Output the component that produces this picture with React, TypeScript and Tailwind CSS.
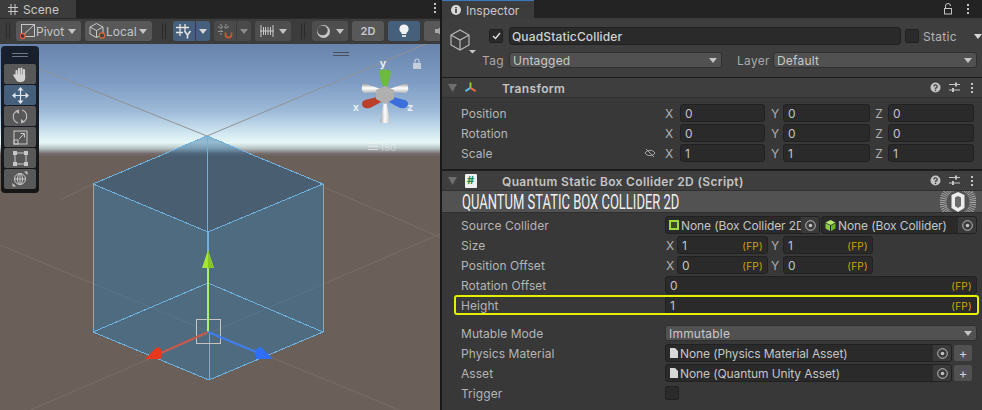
import React from 'react';

const Caret: React.FC<{ className?: string; color?: string }> = ({ className = '', color = '#c4c4c4' }) => (
  <svg width="8" height="5" viewBox="0 0 8 5" className={`shrink-0 ${className}`}>
    <path d="M0 0h8L4 5z" fill={color} />
  </svg>
);

const Grip = () => (
  <div className="flex gap-[2px] mx-[6px] shrink-0 mt-[2px]">
    <div className="w-px h-4 bg-[#2a2a2a]" />
    <div className="w-px h-4 bg-[#2a2a2a]" />
  </div>
);

const Kebab: React.FC<{ className?: string }> = ({ className = '' }) => (
  <svg width="4" height="12" viewBox="0 0 4 12" className={className}>
    <rect x="1" y="1" width="2" height="2" fill="#c4c4c4" />
    <rect x="1" y="5" width="2" height="2" fill="#c4c4c4" />
    <rect x="1" y="9" width="2" height="2" fill="#c4c4c4" />
  </svg>
);

const ToolBtn: React.FC<{ className?: string; children: React.ReactNode }> = ({ className = '', children }) => (
  <div className={`h-5 flex items-center justify-center rounded-[3px] shrink-0 ${className}`}>{children}</div>
);

const stroke = { fill: 'none', stroke: '#c8c8c8', strokeWidth: 1 };

const PivotIcon = () => (
  <svg width="16" height="18" viewBox="4 0 16 18" className="shrink-0">
    <rect x="5.5" y="2.5" width="13" height="12" {...stroke} />
    <path d="M6 14L18 3" {...stroke} />
    <circle cx="6.500" cy="14" r="2.600" fill="#3f3f3f" stroke="#e8643a" strokeWidth="1.200" />
  </svg>
);

const LocalIcon = () => (
  <svg width="17" height="18" viewBox="1.500 0 17 18" className="shrink-0">
    <path d="M2.500 5L9 1.500L15.500 5V12L9 15.500L2.500 12zM2.500 5L9 8.500L15.500 5M9 8.500V15.500" {...stroke} />
    <circle cx="14.500" cy="13.500" r="2.600" fill="#3f3f3f" stroke="#e8643a" strokeWidth="1.200" />
  </svg>
);

const GridYIcon = () => (
  <svg width="18" height="16" viewBox="0 0 18 16">
    <path d="M5 1V13M10 1V8M1 4.500H14M1 9.500H8" fill="none" stroke="#e4e4e4" strokeWidth="1.300" />
    <path d="M9.500 8L12.500 12L15.500 8M12.500 12V15.500" fill="none" stroke="#e4e4e4" strokeWidth="1.600" />
  </svg>
);

const SnapIcon = () => (
  <svg width="16" height="16" viewBox="0 0 16 16">
    <path d="M4 1V12M9 1V6M1 4H12M1 8.500H7" fill="none" stroke="#9a9a9a" strokeWidth="1" strokeDasharray="2 1" />
    <path d="M8.500 9.500V11.500A3 3 0 0 0 14.500 11.500V9.500" fill="none" stroke="#c05a30" strokeWidth="1.800" />
  </svg>
);

const IncrementIcon = () => (
  <svg width="14" height="14" viewBox="0 0 14 14">
    <path d="M1 1V13M13 1V13M0 7H14M3.500 3V11M5.500 3V11M8 3V11M10.500 3V11" fill="none" stroke="#c8c8c8" strokeWidth="1" />
  </svg>
);

const ShadedIcon = () => (
  <svg width="15" height="15" viewBox="0 0 15 15">
    <circle cx="7.500" cy="7.500" r="6.500" fill="#c8c8c8" />
    <ellipse cx="6.500" cy="6.500" rx="5.200" ry="4.800" fill="#4c4c4c" />
  </svg>
);

const BulbIcon = () => (
  <svg width="10" height="14" viewBox="0 0 10 14">
    <path d="M5 0.500A4.500 4.500 0 0 1 7.500 8.800V10H2.500V8.800A4.500 4.500 0 0 1 5 0.500z" fill="#f2f2f2" />
    <rect x="3" y="11" width="4" height="2" fill="#d8d8d8" />
  </svg>
);

const AudioIcon = () => (
  <svg width="12" height="12" viewBox="0 0 12 12">
    <path d="M0 4H3L7 1V11L3 8H0z" fill="#a8a8a8" />
    <path d="M9 3.500A3.500 3.500 0 0 1 9 8.500" fill="none" stroke="#a8a8a8" />
  </svg>
);

const HandTool = () => (
  <svg width="16" height="17" viewBox="0 0 16 17" strokeLinecap="round">
    <path d="M4.500 5V10M7 3V9M9.500 2.500V9M12 4V10" stroke="#d2d2d2" strokeWidth="2.100" fill="none" />
    <path d="M3.600 8.500H13.200V12C13.200 14.500 11.500 16 9 16H7.500C5.500 16 4.500 14.800 3.500 13L1.200 9.500C1 8.500 2.200 7.800 3 8.500z" fill="#d2d2d2" />
  </svg>
);

const MoveTool = () => (
  <svg width="17" height="17" viewBox="0 0 17 17">
    <path d="M8.500 3V14M3 8.500H14" stroke="#dfe6ee" strokeWidth="1.200" />
    <path d="M8.500 0L11.500 3.500H5.500zM8.500 17L5.500 13.500H11.500zM0 8.500L3.500 5.500V11.500zM17 8.500L13.500 11.500V5.500z" fill="#dfe6ee" />
  </svg>
);

const RotateTool = () => (
  <svg width="16" height="17" viewBox="0 0 16 17">
    <path d="M6 15A6.500 6.500 0 0 1 4 3.500M10 2A6.500 6.500 0 0 1 12 13.500" fill="none" stroke="#bdbdbd" strokeWidth="1.100" />
    <path d="M7 1.500V6L3 3zM9 15.500V11L13 14z" fill="#bdbdbd" />
  </svg>
);

const ScaleTool = () => (
  <svg width="15" height="15" viewBox="0 0 15 15">
    <rect x="1" y="1" width="13" height="13" {...stroke} />
    <rect x="1" y="10" width="4" height="4" {...stroke} />
    <path d="M6 9L11 4M7.500 3.500H11.500V7.500" {...stroke} />
  </svg>
);

const RectTool = () => (
  <svg width="15" height="15" viewBox="0 0 15 15">
    <rect x="2" y="2" width="11" height="11" {...stroke} />
    <path d="M0 0h4v4H0zM11 0h4v4h-4zM0 11h4v4H0zM11 11h4v4h-4z" fill="#c8c8c8" />
  </svg>
);

const TransformTool = () => (
  <svg width="16" height="16" viewBox="0 0 16 16">
    <circle cx="8" cy="8" r="5.500" {...stroke} />
    <path d="M8 2.500V13.500M2.500 8H13.500" {...stroke} />
    <path d="M12 0.500H15.500V4zM0.500 12L4 15.500H0.500z" fill="#c8c8c8" />
    <ellipse cx="8" cy="8" rx="2.500" ry="5.500" {...stroke} />
  </svg>
);

const SCENE_TOOLS = [
  { icon: <HandTool />, active: false },
  { icon: <MoveTool />, active: true },
  { icon: <RotateTool />, active: false },
  { icon: <ScaleTool />, active: false },
  { icon: <RectTool />, active: false },
  { icon: <TransformTool />, active: false },
];

const SceneOverlay = () => (
  <div className="absolute left-px top-[2px] w-[38px] h-[147px] rounded-[4px] bg-gradient-to-b from-[#18202e] to-[#161616] px-[3px] flex flex-col">
    <div className="h-[18px] flex flex-col items-center justify-center gap-[2px]">
      <div className="w-4 h-px bg-[#6e7888]" />
      <div className="w-4 h-px bg-[#6e7888]" />
    </div>
    <div className="flex flex-col gap-px">
      {SCENE_TOOLS.map((tool, i) => (
        <div key={i} className={`h-5 flex items-center justify-center rounded-[2px] ${tool.active ? 'bg-[#46607c]' : 'bg-[#585858]'}`}>
          {tool.icon}
        </div>
      ))}
    </div>
  </div>
);

const SceneDrawing = () => (
  <svg viewBox="0 44 440 366" width="440" height="366" className="block">
    <defs>
      <linearGradient id="sky" x1="0" y1="44" x2="0" y2="156" gradientUnits="userSpaceOnUse">
        <stop offset="0" stopColor="#6884ac" />
        <stop offset="0.35" stopColor="#7f9dc4" />
        <stop offset="0.6" stopColor="#9dbad8" />
        <stop offset="0.8" stopColor="#d2e8f2" />
        <stop offset="0.88" stopColor="#e6f7f6" />
        <stop offset="0.93" stopColor="#b9c6c8" />
        <stop offset="0.98" stopColor="#73696a" />
        <stop offset="1" stopColor="#6c615c" />
      </linearGradient>
      <linearGradient id="gizmoWhite" x1="0" y1="0" x2="0" y2="1">
        <stop offset="0" stopColor="#8e8e8e" />
        <stop offset="0.5" stopColor="#ffffff" />
        <stop offset="1" stopColor="#b8b8b8" />
      </linearGradient>
      <linearGradient id="gizmoDown" x1="0" y1="0" x2="1" y2="0">
        <stop offset="0" stopColor="#a0a0a0" />
        <stop offset="0.5" stopColor="#ffffff" />
        <stop offset="1" stopColor="#c0c0c0" />
      </linearGradient>
    </defs>
    <rect x="0" y="44" width="440" height="112" fill="url(#sky)" />
    <rect x="0" y="156" width="440" height="254" fill="#6a5f59" />

    {/* grid lines */}
    <path d="M0 53L207 136L440 38" stroke="#8f9294" strokeWidth="1" fill="none" />
    <path d="M60 200L93 184M323 187L370 207L440 237M0 245L440 427M0 423L440 234" stroke="#786e69" strokeWidth="1" fill="none" />

    {/* cube */}
    <polygon points="207,136 323,184 208,232 93,184" fill="#1a5f97" fillOpacity="0.4" />
    <polygon points="93,184 208,232 209,380 93,332" fill="#267dba" fillOpacity="0.4" />
    <polygon points="323,184 208,232 209,380 323,332" fill="#267dba" fillOpacity="0.4" />
    <g stroke="#6fb0dc" strokeWidth="1" fill="none" shapeRendering="crispEdges">
      <path d="M207 136L323 184L323 332L209 380L93 332L93 184z" />
      <path d="M93 184L208 232L323 184M207 136V232" />
      <path d="M93 332L208 283L323 332M209 332V380" />
    </g>
    <path d="M208 232V252" stroke="#6fb0dc" strokeWidth="2" />

    {/* move handles */}
    <rect x="196.500" y="319.500" width="24" height="24" fill="none" stroke="#c4c4c4" strokeWidth="1" />
    <path d="M208 332V266" stroke="#a6f06a" strokeWidth="2" />
    <path d="M208 250L202 268H214z" fill="#a3e635" />
    <path d="M208 250L208 268H214z" fill="#86c62a" />
    <path d="M208 332L161 353" stroke="#c9594a" strokeWidth="2" />
    <path d="M145 359L156 348C161 345 163 352 161 359z" fill="#e8391c" />
    <path d="M208 332L256 352" stroke="#3f7ef0" strokeWidth="2" />
    <path d="M273 359L262 348C257 345 254 352 256 359z" fill="#2f6ff5" />

    {/* orientation gizmo */}
    <g>
      <path d="M363 83Q360 90 364 93L380 92L384 90z" fill="url(#gizmoWhite)" />
      <path d="M407 83Q410 90 406 93L390 92L386 90z" fill="url(#gizmoWhite)" />
      <path d="M380 122Q385 124 390 122L386 100H384z" fill="url(#gizmoDown)" />
      <path d="M379 71Q385 68 391 71Q390 80 386 90H384Q380 80 379 71z" fill="#6cbb3c" />
      <path d="M365 100L381 96L383 101L370 108Q362 109 362 104Q362 101 365 100z" fill="#b9402c" />
      <path d="M405 100L389 96L387 101L400 108Q408 109 408 104Q408 101 405 100z" fill="#3a6fdc" />
      <polygon points="385,86 394,90 394,99 385,104 376,99 376,90" fill="#b0b0b0" />
    </g>
    <text x="383" y="67" textAnchor="middle" fontFamily="Inter, sans-serif" fontSize="11" fontWeight="600" fill="#eef2f6">y</text>
    <text x="356" y="111" textAnchor="middle" fontFamily="Inter, sans-serif" fontSize="11" fontWeight="600" fill="#eef2f6">x</text>
    <text x="410" y="111" textAnchor="middle" fontFamily="Inter, sans-serif" fontSize="11" fontWeight="600" fill="#eef2f6">z</text>
    <path d="M333 52.500H349M333 55.500H349" stroke="#4a4f5a" strokeWidth="1" />
    <rect x="413" y="63" width="8" height="6" fill="#c4cedb" />
    <path d="M415 63V61A2 2 0 0 1 419 61V63" fill="none" stroke="#c4cedb" strokeWidth="1.200" />

    <path d="M368 143.500H378M368 146.500H378M368 149.500H378" stroke="#f4f4f4" strokeOpacity="0.6" strokeWidth="1" />
    <text x="381" y="151" fontFamily="Inter, sans-serif" fontSize="11" fill="#f4f4f4" fillOpacity="0.45">Iso</text>
  </svg>
);

const SceneView = () => (
  <div className="w-[440px] shrink-0 flex flex-col">
    <div className="h-[18px] bg-[#232323] flex justify-between shrink-0">
      <div className="w-[76px] bg-[#3c3c3c] flex items-center pl-2 gap-[5px] text-[#c8c8c8] text-[12px] tracking-[0.1px]">
        <svg width="10" height="11" viewBox="0 0 10 11">
          <path d="M3 0V11M7 0V11M0 3.500H10M0 7.500H10" stroke="#c8c8c8" strokeWidth="1" fill="none" />
        </svg>
        <span className="translate-y-px">Scene</span>
      </div>
      <Kebab className="mr-[3px] mt-[2px]" />
    </div>
    <div className="h-[26px] bg-[#3c3c3c] border-t border-[#2a2a2a] flex items-start pt-[2px] overflow-hidden shrink-0">
      <Grip />
      <ToolBtn className="w-[65px] bg-[#585858] pl-1 text-[#c4c4c4] justify-start">
        <PivotIcon />
        <span className="w-[32px] translate-y-px">Pivot</span>
        <Caret />
      </ToolBtn>
      <ToolBtn className="w-[67px] ml-1 bg-[#585858] pl-1 text-[#c4c4c4] justify-start">
        <LocalIcon />
        <span className="w-[33px] translate-y-px">Local</span>
        <Caret />
      </ToolBtn>
      <div className="w-1 shrink-0" />
      <Grip />
      <div className="flex gap-px ml-[1px] shrink-0">
        <ToolBtn className="w-[22px] bg-[#46607c] rounded-r-none"><GridYIcon /></ToolBtn>
        <ToolBtn className="w-[14px] bg-[#46607c] rounded-l-none"><Caret color="#d8d8d8" /></ToolBtn>
      </div>
      <div className="flex gap-px ml-1 shrink-0">
        <ToolBtn className="w-[22px] bg-[#4a4a4a] rounded-r-none"><SnapIcon /></ToolBtn>
        <ToolBtn className="w-[14px] bg-[#4a4a4a] rounded-l-none"><Caret color="#8a8a8a" /></ToolBtn>
      </div>
      <ToolBtn className="w-9 ml-1 bg-[#4e4e4e] gap-[5px]">
        <IncrementIcon />
        <Caret />
      </ToolBtn>
      <div className="w-1 shrink-0" />
      <Grip />
      <ToolBtn className="w-9 bg-[#4e4e4e] gap-[5px] ml-[1px]">
        <ShadedIcon />
        <Caret />
      </ToolBtn>
      <ToolBtn className="w-8 ml-1 bg-[#585858] text-[#c8c8c8] text-[11px] font-semibold">2D</ToolBtn>
      <ToolBtn className="w-8 ml-1 bg-[#46607c]"><BulbIcon /></ToolBtn>
      <ToolBtn className="w-8 ml-1 bg-[#585858] justify-start pl-[11px]"><AudioIcon /></ToolBtn>
    </div>
    <div className="relative h-[366px] overflow-hidden">
      <SceneDrawing />
      <SceneOverlay />
    </div>
  </div>
);

const Field: React.FC<{ value?: string; fp?: boolean; className?: string }> = ({ value, fp, className = '' }) => (
  <div className={`h-[18px] rounded-[3px] bg-[#2a2a2a] border border-[#212121] flex items-center justify-between pl-1 pr-[4px] text-[#c4c4c4] shrink-0 ${className}`}>
    <span className="translate-y-px">{value}</span>
    {fp && <span className="text-[10px] text-[#d0a800] tracking-[0.3px] translate-y-px">(FP)</span>}
  </div>
);

const Row: React.FC<{ label: string; children: React.ReactNode; className?: string }> = ({ label, children, className = '' }) => (
  <div className={`h-5 flex items-center pl-[19px] pr-[5px] ${className}`}>
    <div className="w-[204px] shrink-0 text-[#b4b4b4] tracking-[0.05px] translate-y-px">{label}</div>
    {children}
  </div>
);

const Axis: React.FC<{ name: string; className?: string }> = ({ name, className = '' }) => (
  <span className={`text-[#b0b0b0] w-2 text-center shrink-0 translate-y-px ${className}`}>{name}</span>
);

const HelpIcon = () => (
  <svg width="11" height="11" viewBox="0 0 11 11" className="shrink-0">
    <circle cx="5.500" cy="5.500" r="5" fill="#c4c4c4" />
    <path d="M3.800 4.300A1.700 1.700 0 1 1 5.500 6.200V7" fill="none" stroke="#3e3e3e" strokeWidth="1.300" />
    <rect x="4.800" y="7.700" width="1.400" height="1.400" fill="#3e3e3e" />
  </svg>
);

const PresetsIcon = () => (
  <svg width="11" height="11" viewBox="0 0 11 11" className="ml-2 shrink-0">
    <path d="M0 2.500H11M0 8H11" stroke="#c4c4c4" strokeWidth="1" />
    <path d="M7 0.500V4.500M4 6V10" stroke="#c4c4c4" strokeWidth="2" />
  </svg>
);

const ComponentHeader: React.FC<{ icon: React.ReactNode; title: string }> = ({ icon, title }) => (
  <div className="h-5 bg-[#3e3e3e] border-b border-[#2f2f2f] flex items-center pl-[6px] pr-[8px] shrink-0">
    <svg width="9" height="8" viewBox="0 0 9 8" className="shrink-0">
      <path d="M0 0h9L4.500 8z" fill="#6e6e6e" />
    </svg>
    <div className="w-[13px] ml-[7px] flex justify-center shrink-0">{icon}</div>
    <span className="ml-[25px] font-semibold text-[#c4c4c4] tracking-[0.35px] grow translate-y-px">{title}</span>
    <HelpIcon />
    <PresetsIcon />
    <Kebab className="ml-[10px]" />
  </div>
);

const TransformGlyph = () => (
  <svg width="14" height="13" viewBox="0 0 14 13">
    <path d="M7 1V7" stroke="#9bd13c" strokeWidth="2" />
    <path d="M7 7L1.500 10.500" stroke="#58b8ea" strokeWidth="2.200" />
    <path d="M7 7L12.500 10.500" stroke="#e86a3a" strokeWidth="2.200" />
  </svg>
);

const ScriptGlyph = () => (
  <div className="w-3 h-[14px] bg-[#f0f0f0] rounded-[1px] flex items-center justify-center text-[#1f8a3c] text-[11px] font-bold leading-none">#</div>
);

const ObjectIcon: React.FC<{ kind: 'square' | 'cube' | 'file' }> = ({ kind }) => {
  if (kind === 'square') {
    return (
      <svg width="10" height="10" viewBox="0 0 10 10" className="shrink-0">
        <rect x="1" y="1" width="8" height="8" fill="#3a4a2a" stroke="#9cdb3c" strokeWidth="2" />
      </svg>
    );
  }
  if (kind === 'cube') {
    return (
      <svg width="11" height="11" viewBox="0 0 11 11" className="shrink-0">
        <path d="M5.500 0L10.500 2.500L5.500 5L0.500 2.500z" fill="#b5e86a" />
        <path d="M0.500 3.200L5 5.500V11L0.500 8.500z" fill="#8ccb3c" />
        <path d="M10.500 3.200L6 5.500V11L10.500 8.500z" fill="#6fb02a" />
      </svg>
    );
  }
  return (
    <svg width="8" height="10" viewBox="0 0 8 10" className="shrink-0 ml-px">
      <path d="M0 0H5L8 3V10H0z" fill="#d8d8d8" />
    </svg>
  );
};

const Target = () => (
  <svg width="11" height="11" viewBox="0 0 11 11">
    <circle cx="5.500" cy="5.500" r="4.800" fill="none" stroke="#c0c0c0" strokeWidth="1" />
    <circle cx="5.500" cy="5.500" r="1.800" fill="#c0c0c0" />
  </svg>
);

const ObjectField: React.FC<{ kind: 'square' | 'cube' | 'file'; text: string; className?: string }> = ({ kind, text, className = '' }) => (
  <div className={`h-[18px] rounded-[3px] bg-[#2a2a2a] border border-[#212121] flex items-center pl-[3px] text-[#c4c4c4] shrink-0 overflow-hidden ${className}`}>
    <ObjectIcon kind={kind} />
    <span className="ml-[2px] grow min-w-0 whitespace-nowrap overflow-hidden leading-[16px] tracking-[-0.1px] translate-y-px">{text}</span>
    <div className="w-[18px] h-full bg-[#3a3a3a] flex items-center justify-center shrink-0">
      <Target />
    </div>
  </div>
);

const PlusButton = () => (
  <div className="w-[18px] h-4 ml-[2px] rounded-[2px] bg-[#515151] text-[#d0d0d0] flex items-center justify-center text-[13px] leading-none shrink-0">+</div>
);

const Dropdown: React.FC<{ value: string; className?: string }> = ({ value, className = '' }) => (
  <div className={`h-4 rounded-[3px] bg-[#515151] border border-[#303030] flex items-center justify-between pl-[3px] pr-[4px] text-[#c8c8c8] shrink-0 tracking-[0.2px] ${className}`}>
    <span className="translate-y-px">{value}</span>
    <Caret />
  </div>
);

const Checkbox: React.FC<{ checked?: boolean; className?: string }> = ({ checked, className = '' }) => (
  <div className={`w-[14px] h-[14px] rounded-[2px] bg-[#2a2a2a] border border-[#212121] flex items-center justify-center shrink-0 ${className}`}>
    {checked && (
      <svg width="9" height="8" viewBox="0 0 9 8">
        <path d="M1 4L3.500 6.500L8 1" fill="none" stroke="#e0e0e0" strokeWidth="1.400" />
      </svg>
    )}
  </div>
);

const Inspector = () => (
  <div className="w-[540px] ml-[2px] shrink-0 flex flex-col bg-[#383838] h-[410px] overflow-hidden">
    <div className="h-[18px] bg-[#232323] flex justify-between shrink-0">
      <div className="w-[92px] bg-[#3c3c3c] border-t border-[#3a79bb] flex items-center pl-[9px] gap-[5px] text-[#c8c8c8]">
        <svg width="10" height="10" viewBox="0 0 10 10">
          <circle cx="5" cy="5" r="5" fill="#d8d8d8" />
          <rect x="4.200" y="4" width="1.600" height="4" fill="#3c3c3c" />
          <rect x="4.200" y="2" width="1.600" height="1.400" fill="#3c3c3c" />
        </svg>
        <span className="translate-y-px">Inspector</span>
      </div>
      <div className="flex items-center gap-[13px] pr-[12px]">
        <svg width="10" height="12" viewBox="0 0 10 12">
          <rect x="1.500" y="5.500" width="7" height="5.500" fill="none" stroke="#c4c4c4" />
          <path d="M2.500 5V3A2.500 2.500 0 0 1 7.500 3" fill="none" stroke="#c4c4c4" />
        </svg>
        <Kebab />
      </div>
    </div>

    <div className="h-[59px] bg-[#3e3e3e] flex pt-[9px] shrink-0">
      <div className="w-10 shrink-0 pl-2 pt-[2px]">
        <svg width="28" height="25" viewBox="0 0 28 25">
          <path d="M1 6L10 1L19 6V16L10 21L1 16zM1 6L10 11L19 6M10 11V21" fill="none" stroke="#b8b8b8" strokeWidth="1.200" />
          <path d="M19 21H26L22.500 24.500z" fill="#c8c8c8" />
        </svg>
      </div>
      <div className="flex flex-col gap-[7px]">
        <div className="flex items-center h-[18px] pl-[7px]">
          <Checkbox checked />
          <div className="w-[392px] ml-[6px] h-[18px] rounded-[3px] bg-[#2a2a2a] border border-[#212121] flex items-center pl-[2px] font-medium text-[#d2d2d2] tracking-[0.15px]">
            <span className="translate-y-px">QuadStaticCollider</span>
          </div>
          <Checkbox className="ml-1" />
          <span className="ml-1 text-[#b4b4b4] tracking-[0.3px] translate-y-px">Static</span>
          <Caret className="ml-[17px]" color="#d8d8d8" />
        </div>
        <div className="flex items-center h-4">
          <span className="w-[27px] text-[#a8a8a8] tracking-[0.3px] translate-y-px">Tag</span>
          <Dropdown value="Untagged" className="w-[213px]" />
          <span className="w-[36px] ml-[15px] text-[#a8a8a8] tracking-[0.3px] translate-y-px">Layer</span>
          <Dropdown value="Default" className="w-[204px]" />
        </div>
      </div>
    </div>

    <div className="h-px bg-[#1c1c1c] shrink-0" />
    <ComponentHeader icon={<TransformGlyph />} title="Transform" />
    <div className="h-[71px] pt-[5px] shrink-0">
      {[['Position', '0', '0', '0'], ['Rotation', '0', '0', '0'], ['Scale', '1', '1', '1']].map(([label, x, y, z]) => (
        <Row key={label} label={label} className="relative">
          {label === 'Scale' && (
            <svg width="12" height="10" viewBox="0 0 12 10" className="absolute left-[202px] top-[5px]">
              <path d="M1 5C3 1.500 9 1.500 11 5C9 8.500 3 8.500 1 5zM2 1L10 9" fill="none" stroke="#a8a8a8" strokeWidth="1" />
            </svg>
          )}
          <Axis name="X" />
          <Field value={x} className="w-[85px] ml-[7px]" />
          <Axis name="Y" className="ml-[6px]" />
          <Field value={y} className="w-[87px] ml-1" />
          <Axis name="Z" className="ml-[5px]" />
          <Field value={z} className="w-[86px] ml-[5px]" />
        </Row>
      ))}
    </div>

    <div className="h-0.5 bg-[#1c1c1c] shrink-0" />
    <ComponentHeader icon={<ScriptGlyph />} title="Quantum Static Box Collider 2D (Script)" />
    <div className="h-[22px] bg-[#525252] border-b border-[#2f2f2f] flex items-center justify-between pl-[20px] pr-[6px] shrink-0 overflow-hidden">
      <span className="font-['Roboto',sans-serif] font-normal text-[20px] text-[#f0f0f0] leading-[20px] whitespace-nowrap origin-left scale-x-[0.65]">QUANTUM STATIC BOX COLLIDER 2D</span>
      <svg width="36" height="22" viewBox="0 0 36 22" className="shrink-0">
        <circle cx="18" cy="11" r="15" fill="none" stroke="#c4c4c4" strokeWidth="7" strokeDasharray="1 1" opacity="0.7" />
        <path d="M18 1L24.500 4V17L18 21L11.500 17V4z" fill="#ececec" />
        <path d="M18 5L21 6.500V15L18 17L15 15V6.500z" fill="#6a6a6a" />
      </svg>
    </div>
    <div className="pt-[2px] flex flex-col shrink-0">
      <Row label="Source Collider">
        <ObjectField kind="square" text="None (Box Collider 2D)" className="w-[155px]" />
        <ObjectField kind="cube" text="None (Box Collider)" className="w-[156px] ml-px" />
      </Row>
      <Row label="Size">
        <Axis name="X" className="ml-px" />
        <Field value="1" fp className="w-[91px] ml-[3px]" />
        <Axis name="Y" className="ml-[3px]" />
        <Field value="1" fp className="w-[90px] ml-1" />
      </Row>
      <Row label="Position Offset">
        <Axis name="X" className="ml-px" />
        <Field value="0" fp className="w-[91px] ml-[3px]" />
        <Axis name="Y" className="ml-[3px]" />
        <Field value="0" fp className="w-[90px] ml-1" />
      </Row>
      <Row label="Rotation Offset">
        <Field value="0" fp className="w-[312px]" />
      </Row>
      <Row label="Height" className="relative">
        <Field value="1" fp className="w-[312px]" />
        <div className="absolute left-3 right-[3px] top-0 bottom-0 border-2 border-[#e4f000] rounded-[3px]" />
      </Row>
      <div className="h-2" />
      <Row label="Mutable Mode">
        <Dropdown value="Immutable" className="w-[312px]" />
      </Row>
      <Row label="Physics Material">
        <ObjectField kind="file" text="None (Physics Material Asset)" className="w-[287px]" />
        <PlusButton />
      </Row>
      <Row label="Asset">
        <ObjectField kind="file" text="None (Quantum Unity Asset)" className="w-[287px]" />
        <PlusButton />
      </Row>
      <Row label="Trigger">
        <Checkbox />
      </Row>
    </div>
  </div>
);

const App: React.FC = () => {
  return (
    <div className="w-[982px] h-[410px] flex bg-[#191919] overflow-hidden font-['Inter','Noto_Sans',sans-serif] text-[12px] leading-none">
      <SceneView />
      <Inspector />
    </div>
  );
};

export default App;
